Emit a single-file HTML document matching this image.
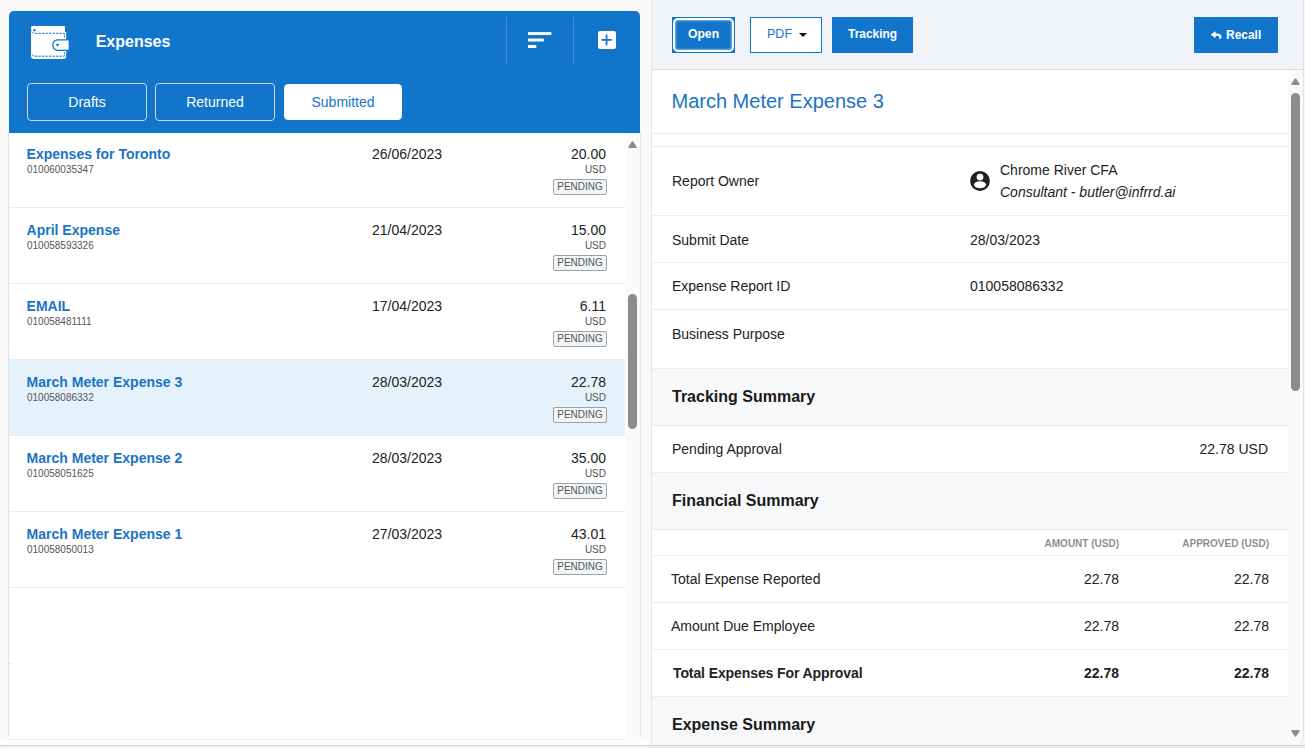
<!DOCTYPE html>
<html><head><meta charset="utf-8">
<style>
*{box-sizing:border-box;margin:0;padding:0}
html,body{width:1305px;height:748px;overflow:hidden;background:#f9f9f9;font-family:"Liberation Sans",sans-serif;color:#222}
.abs{position:absolute}

/* scrollbars */
.sb-up{position:absolute;width:9px;height:7px}
.sb-dn{position:absolute;width:9px;height:7px}
.thumb{position:absolute;width:9px;background:#8c8c8c;border-radius:4.5px}
/* right panel */
#right{position:absolute;left:651px;top:0;width:653px;height:745px;overflow:hidden;border-radius:0 0 8px 0;background:#fff;border-left:1px solid #e2e5e9;border-right:1px solid #e0e0e0}
#rtop{position:absolute;left:0;top:0;width:651px;height:70px;background:#f0f3f7;border-bottom:1px solid #d8dce0}
.bt{position:absolute;top:-1px;height:70px;line-height:70px;font-size:13.5px;color:#fff;white-space:nowrap;transform-origin:0 50%}
.btn{position:absolute;top:17px;height:36px;background:#1175cc;color:#fff;font-size:12px;font-weight:bold;text-align:center;line-height:36px;white-space:nowrap}
#rcont{position:absolute;left:0;top:70px;width:636px;height:676px;overflow:hidden}
.rt{position:absolute;left:20px;font-size:14px;color:#222;white-space:nowrap}
.hl{position:absolute;left:0;width:636px;height:1px;background:#ececec}
.sec{position:absolute;left:0;width:636px;background:#f7f8fa;border-top:1px solid #ececec;border-bottom:1px solid #e6e7ea}
.sh{position:absolute;left:20px;font-size:16px;font-weight:bold;color:#1a1a1a;white-space:nowrap}
/* left panel */
#left{position:absolute;left:0;top:0;width:651px;height:748px;}
#lhead{position:absolute;z-index:2;left:9px;top:11px;width:631px;height:122px;background:#1175cc;border-radius:5px 5px 0 0}
#list{position:absolute;left:9px;top:132px;width:616px;height:608px;background:#fff;border-bottom:1px solid #ececec}
#lbl{position:absolute;left:8px;top:133px;width:1px;height:602px;background:#e3e3e3}
#lbr{position:absolute;left:640px;top:133px;width:1px;height:602px;background:#e3e3e3}
#lscroll{position:absolute;left:625px;top:133px;width:15px;height:612px;background:#fafafa}
.row{position:absolute;left:0;width:616px;height:76px;border-bottom:1px solid #ebebeb;background:#fff}
.row.sel{background:#e6f2fb}
.row .t{position:absolute;left:17.6px;top:14px;font-size:14px;font-weight:bold;color:#1a73c4;white-space:nowrap}
.row .id{position:absolute;left:18px;top:32px;font-size:10px;color:#555;white-space:nowrap}
.row .d{position:absolute;left:363px;top:14px;font-size:14px;color:#222}
.row .a{position:absolute;right:19px;top:14px;font-size:14px;color:#222;text-align:right}
.row .u{position:absolute;right:19px;top:32px;font-size:10px;color:#555}
.row .p{position:absolute;right:18px;top:47px;width:54px;height:16px;border:1px solid #9aa0a6;border-radius:2px;background:#f3f6f9;font-size:10px;color:#555;text-align:center;line-height:14px}

#lhead .title{position:absolute;left:86.7px;top:22px;font-size:16px;font-weight:bold;color:#fff;white-space:nowrap}
#lhead .div{position:absolute;top:6px;width:1px;height:48px;background:#3f8fd6}
.tab{position:absolute;top:72px;height:38px;border:1px solid #d2d7dc;border-radius:4px;color:#fff;font-size:14px;text-align:center;line-height:36px}
.tab.on{background:#fff;color:#1175cc;border-color:#fff}
</style></head>
<body>
<div id="left">
  <div id="lhead">
    <svg class="abs" style="left:22px;top:15px" width="38" height="34" viewBox="0 0 38 34">
      <rect x="0" y="-0.3" width="34" height="5" rx="2" fill="#fff"/>
      <rect x="0" y="3" width="35.2" height="29.9" rx="3" fill="#fff"/>
      <rect x="2.2" y="3.2" width="2.4" height="2" fill="#1175cc"/>
      <rect x="34" y="3" width="1.3" height="3" fill="#1175cc"/>
      <path d="M1.2,5.8 L2.6,7.3 H33.4 V11.5" fill="none" stroke="#1175cc" stroke-width="1" stroke-dasharray="2.4 1.1"/>
      <path d="M1.2,28.6 L2.6,30.2 H33.4 V26.2" fill="none" stroke="#1175cc" stroke-width="1" stroke-dasharray="2.4 1.1"/>
      <path d="M37.6,13.9 H26.1 A5.3,5.3 0 0 0 26.1,24.3 H37.6 Z" fill="#fff" stroke="#1175cc" stroke-width="1.3"/>
      <rect x="36.2" y="14.6" width="1.5" height="9" fill="#fff"/>
      <path d="M24.8,18.3 C24.8,17.6 25.6,17.4 26.5,18.2 C27.4,17.4 28.2,17.6 28.2,18.3 L26.5,20.8 Z" fill="#1175cc"/>
    </svg>
    <div class="title">Expenses</div>
    <div class="div" style="left:497px"></div>
    <div class="div" style="left:564px"></div>
    <svg class="abs" style="left:519px;top:21px" width="24" height="18" viewBox="0 0 24 18">
      <rect x="0" y="0.1" width="23.3" height="2.9" fill="#fff"/>
      <rect x="0" y="6.6" width="15.8" height="2.9" fill="#fff"/>
      <rect x="0" y="13.1" width="8.3" height="2.9" fill="#fff"/>
    </svg>
    <svg class="abs" style="left:589px;top:20px" width="19" height="19" viewBox="0 0 19 19">
      <rect x="0" y="0" width="18" height="18" rx="2.2" fill="#fff"/>
      <path d="M8.6,3.6 V14.2 M3.4,8.9 H13.9" stroke="#1175cc" stroke-width="1.7"/>
    </svg>
    <div class="tab" style="left:18px;width:120px">Drafts</div>
    <div class="tab" style="left:146px;width:120px">Returned</div>
    <div class="tab on" style="left:275px;top:73px;height:36px;line-height:34px;width:118px">Submitted</div>
  </div>
  <div id="lscroll"><div class="sb-up" style="left:3px;top:8px"><svg width="9" height="7" style="display:block"><path d="M1,6.2 L4.5,0.9 L8,6.2 Z" fill="#8c8c8c" stroke="#8c8c8c" stroke-width="1.4" stroke-linejoin="round"/></svg></div><div class="thumb" style="left:3px;top:161px;height:135px"></div></div>
  <div id="lbl"></div><div id="lbr"></div>
  <div id="list"><div class="abs" style="left:0;top:531px;width:3px;height:1px;background:#e6e6e6"></div>
        <div class="row" style="top:0"><div class="t">Expenses for Toronto</div><div class="id">010060035347</div><div class="d">26/06/2023</div><div class="a">20.00</div><div class="u">USD</div><div class="p">PENDING</div></div>
    <div class="row" style="top:76px"><div class="t">April Expense</div><div class="id">010058593326</div><div class="d">21/04/2023</div><div class="a">15.00</div><div class="u">USD</div><div class="p">PENDING</div></div>
    <div class="row" style="top:152px"><div class="t">EMAIL</div><div class="id">010058481111</div><div class="d">17/04/2023</div><div class="a">6.11</div><div class="u">USD</div><div class="p">PENDING</div></div>
    <div class="row sel" style="top:228px"><div class="t">March Meter Expense 3</div><div class="id">010058086332</div><div class="d">28/03/2023</div><div class="a">22.78</div><div class="u">USD</div><div class="p">PENDING</div></div>
    <div class="row" style="top:304px"><div class="t">March Meter Expense 2</div><div class="id">010058051625</div><div class="d">28/03/2023</div><div class="a">35.00</div><div class="u">USD</div><div class="p">PENDING</div></div>
    <div class="row" style="top:380px"><div class="t">March Meter Expense 1</div><div class="id">010058050013</div><div class="d">27/03/2023</div><div class="a">43.01</div><div class="u">USD</div><div class="p">PENDING</div></div>
  </div>
</div>

<div id="right">
  <div id="rtop">
    <div class="btn" style="left:20px;width:63px;"><div class="abs" style="left:1px;top:1px;right:1px;bottom:1px;border:2px solid #fff;border-radius:5px;box-shadow:inset 0 0 2px 1px rgba(255,255,255,.45)"></div></div>
    <span class="bt" style="left:35.5px;font-weight:bold;transform:scaleX(0.9)">Open</span>
    <div class="btn" style="left:98px;width:72px;background:#fff;border:1px solid #1175cc"></div>
    <span class="bt" style="left:114.5px;color:#1a73c4;transform:scaleX(0.93)">PDF</span>
    <div class="abs" style="left:147px;top:33px;width:0;height:0;border-left:4px solid transparent;border-right:4px solid transparent;border-top:4.5px solid #111"></div>
    <div class="btn" style="left:180px;width:81px"></div>
    <span class="bt" style="left:196px;font-weight:bold;transform:scaleX(0.885)">Tracking</span>
    <div class="btn" style="left:542px;width:84px"><svg class="abs" style="left:17px;top:13.5px" width="10.5" height="8.5" viewBox="0 0 512 480" preserveAspectRatio="none"><path d="M8.309 189.836L184.313 37.851C199.719 24.546 224 35.347 224 56.015v80.053c160.629 1.839 288 34.032 288 186.258 0 61.441-39.581 122.309-83.333 154.132-13.653 9.931-33.111-2.533-28.077-18.631 45.344-145.012-21.507-183.51-176.59-185.742V360c0 20.7-24.3 31.453-39.687 18.164l-176.004-152c-11.071-9.562-11.086-26.753 0-36.328z" fill="#fff"/></svg></div>
    <span class="bt" style="left:573.5px;top:0;font-weight:bold;transform:scaleX(0.885)">Recall</span>
  </div>
  <div class="abs" style="left:636px;top:70px;width:15px;height:676px;background:#fafafa">
    <div class="sb-up" style="left:3px;top:8px"><svg width="9" height="7" style="display:block"><path d="M1,6.2 L4.5,0.9 L8,6.2 Z" fill="#8c8c8c" stroke="#8c8c8c" stroke-width="1.4" stroke-linejoin="round"/></svg></div>
    <div class="thumb" style="left:3px;top:23px;height:298px"></div>
    <div class="sb-dn" style="left:3px;top:660px"><svg width="9" height="7" style="display:block"><path d="M1,0.8 L4.5,6.1 L8,0.8 Z" fill="#8c8c8c" stroke="#8c8c8c" stroke-width="1.4" stroke-linejoin="round"/></svg></div>
  </div>
  <div id="rcont">
    <div class="abs" style="left:19.5px;top:20px;font-size:20px;color:#1a73c4;white-space:nowrap">March Meter Expense 3</div>
    <div class="hl" style="top:63px"></div>
    <div class="hl" style="top:76px"></div>
    <div class="rt" style="top:103px">Report Owner</div>
    <svg class="abs" style="left:317px;top:100px" width="22" height="22" viewBox="0 0 22 22">
      <circle cx="11" cy="11" r="9.9" fill="#1e1f22"/>
      <circle cx="11" cy="7.1" r="3.4" fill="#fff"/>
      <ellipse cx="11" cy="14.7" rx="6.1" ry="3.5" fill="#fff"/>
    </svg>
    <div class="rt" style="left:348px;top:92px">Chrome River CFA</div>
    <div class="rt" style="left:348px;top:114px;font-style:italic">Consultant - butler@infrrd.ai</div>
    <div class="hl" style="top:145px"></div>
    <div class="rt" style="top:162px">Submit Date</div>
    <div class="rt" style="left:318px;top:162px">28/03/2023</div>
    <div class="hl" style="top:192px"></div>
    <div class="rt" style="top:208px">Expense Report ID</div>
    <div class="rt" style="left:318px;top:208px">010058086332</div>
    <div class="hl" style="top:239px"></div>
    <div class="rt" style="top:256px">Business Purpose</div>
    <div class="sec" style="top:298px;height:58px"><div class="sh" style="top:19px">Tracking Summary</div></div>
    <div class="rt" style="top:371px">Pending Approval</div>
    <div class="rt" style="left:auto;right:20px;top:371px">22.78 USD</div>
    <div class="sec" style="top:402px;height:58px"><div class="sh" style="top:19px">Financial Summary</div></div>
    <div class="abs" style="right:169px;top:468px;font-size:10px;font-weight:bold;color:#8c9096;white-space:nowrap">AMOUNT (USD)</div>
    <div class="abs" style="right:19px;top:468px;font-size:10px;font-weight:bold;color:#8c9096;white-space:nowrap">APPROVED (USD)</div>
    <div class="hl" style="top:485px"></div>
    <div class="rt" style="left:19px;top:501px">Total Expense Reported</div>
    <div class="rt" style="left:auto;right:169px;top:501px">22.78</div>
    <div class="rt" style="left:auto;right:19px;top:501px">22.78</div>
    <div class="hl" style="top:532px"></div>
    <div class="rt" style="left:19px;top:548px">Amount Due Employee</div>
    <div class="rt" style="left:auto;right:169px;top:548px">22.78</div>
    <div class="rt" style="left:auto;right:19px;top:548px">22.78</div>
    <div class="hl" style="top:579px"></div>
    <div class="rt" style="left:21px;top:595px;font-weight:bold;letter-spacing:-0.1px">Total Expenses For Approval</div>
    <div class="rt" style="left:auto;right:169px;top:595px;font-weight:bold">22.78</div>
    <div class="rt" style="left:auto;right:19px;top:595px;font-weight:bold">22.78</div>
    <div class="sec" style="top:626px;height:80px"><div class="sh" style="top:19px">Expense Summary</div></div>
  </div>
</div>
<div class="abs" style="left:0;top:740px;width:651px;height:5px;background:#fcfcfc;border-radius:0 0 0 8px"></div>
<div class="abs" style="left:0;top:745px;width:1305px;height:1px;background:#d6d6d6"></div>
<div class="abs" style="left:0;top:746px;width:1305px;height:2px;background:#ededed"></div>
</body></html>
